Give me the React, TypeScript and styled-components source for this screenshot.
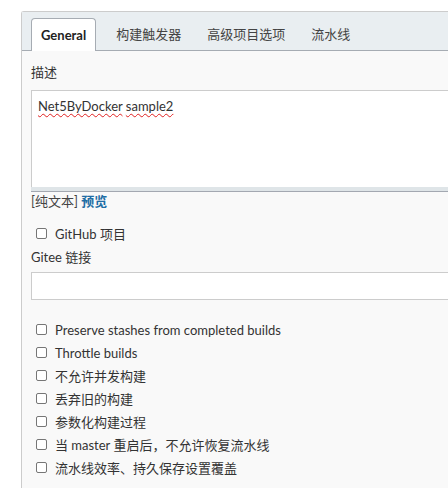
import React from "react";
import styled, { createGlobalStyle } from "styled-components";

const Global = createGlobalStyle`
  html, body { margin: 0; padding: 0; background: #fff; }
  body { font-family: Lato, "Noto Sans CJK SC", sans-serif; font-size: 13px; color: #333; }
`;

const Page = styled.div`
  padding: 11px 0 0 21px;
  width: 448px;
  height: 488px;
  box-sizing: border-box;
  overflow: hidden;
`;

const Panel = styled.div`
  border: 1px solid #ccc;
  border-right: none;
  border-bottom: none;
  background: #f9f9f9;
  height: 600px;
  border-top-left-radius: 3px;
`;

const TabBar = styled.div`
  display: flex;
  align-items: flex-end;
  background: #e9eef1;
  border-bottom: 1px solid #a6acb3;
  height: 38px;
  padding-left: 9px;
`;

const Tab = styled.div<{ $active?: boolean }>`
  height: ${(p) => (p.$active ? "33px" : "32px")};
  margin-bottom: ${(p) => (p.$active ? "-1px" : "0")};
  box-sizing: border-box;
  padding: 0 ${(p) => (p.$active ? "9px" : "13px")};
  display: flex;
  align-items: center;
  font-size: 13px;
  line-height: 18px;
  font-weight: ${(p) => (p.$active ? 700 : 400)};
  color: ${(p) => (p.$active ? "#222" : "#444")};
  background: ${(p) => (p.$active ? "#fff" : "transparent")};
  border: ${(p) => (p.$active ? "1px solid #a6acb3" : "none")};
  border-bottom: none;
  border-radius: 4px 4px 0 0;
  margin-right: ${(p) => (p.$active ? "7px" : "0")};
`;

const Content = styled.div`
  padding: 12px 0 0 9px;
  display: flex;
  flex-direction: column;
`;

const Label = styled.div<{ $top?: number }>`
  font-size: 13px;
  line-height: 18px;
  margin-top: ${(p) => p.$top ?? 0}px;
  color: #333;
`;

const TextAreaBox = styled.div`
  margin-top: 9px;
  border: 1px solid #ccc;
  border-right: none;
  border-bottom: none;
  background: #fff;
  height: 97px;
  padding: 6px 6px;
  line-height: 18px;
  box-sizing: border-box;
`;

const Spell = styled.span`
  text-decoration: underline wavy #e02020;
  text-decoration-thickness: 1px;
  text-underline-offset: 2px;
`;

const Handle = styled.div`
  height: 4px;
  background: #dfe5e8;
  border-bottom: 1px solid #a3a8b1;
`;

const Preview = styled.div`
  line-height: 18px;
  color: #444;
`;

const Link = styled.span`
  color: #1f6ea5;
  font-weight: 700;
`;

const CheckRow = styled.label<{ $top?: number }>`
  display: flex;
  align-items: center;
  height: 23px;
  line-height: 18px;
  margin-top: ${(p) => p.$top ?? 0}px;
  padding-left: 5px;
  color: #333;
`;

const Box = styled.span`
  width: 11px;
  height: 11px;
  box-sizing: border-box;
  border: 1px solid #767676;
  border-radius: 2px;
  background: #fff;
  margin-right: 8px;
  flex: none;
`;

const Input = styled.div`
  margin-top: 6px;
  height: 28px;
  box-sizing: border-box;
  border: 1px solid #ccc;
  border-right: none;
  background: #fff;
`;

const Check = ({ children, top }: { children: React.ReactNode; top?: number }) => (
  <CheckRow $top={top}>
    <Box />
    <span>{children}</span>
  </CheckRow>
);

export default function App() {
  return (
    <>
      <Global />
      <Page>
        <Panel>
          <TabBar>
            <Tab $active>General</Tab>
            <Tab>构建触发器</Tab>
            <Tab>高级项目选项</Tab>
            <Tab>流水线</Tab>
          </TabBar>
          <Content>
            <Label>描述</Label>
            <TextAreaBox>
              <Spell>Net5ByDocker</Spell> <Spell>sample2</Spell>
            </TextAreaBox>
            <Handle />
            <Preview>
              [纯文本] <Link>预览</Link>
            </Preview>
            <Check top={12}>GitHub 项目</Check>
            <Label $top={3}>Gitee 链接</Label>
            <Input />
            <Check top={18}>Preserve stashes from completed builds</Check>
            <Check>Throttle builds</Check>
            <Check>不允许并发构建</Check>
            <Check>丢弃旧的构建</Check>
            <Check>参数化构建过程</Check>
            <Check>当 master 重启后，不允许恢复流水线</Check>
            <Check>流水线效率、持久保存设置覆盖</Check>
          </Content>
        </Panel>
      </Page>
    </>
  );
}
